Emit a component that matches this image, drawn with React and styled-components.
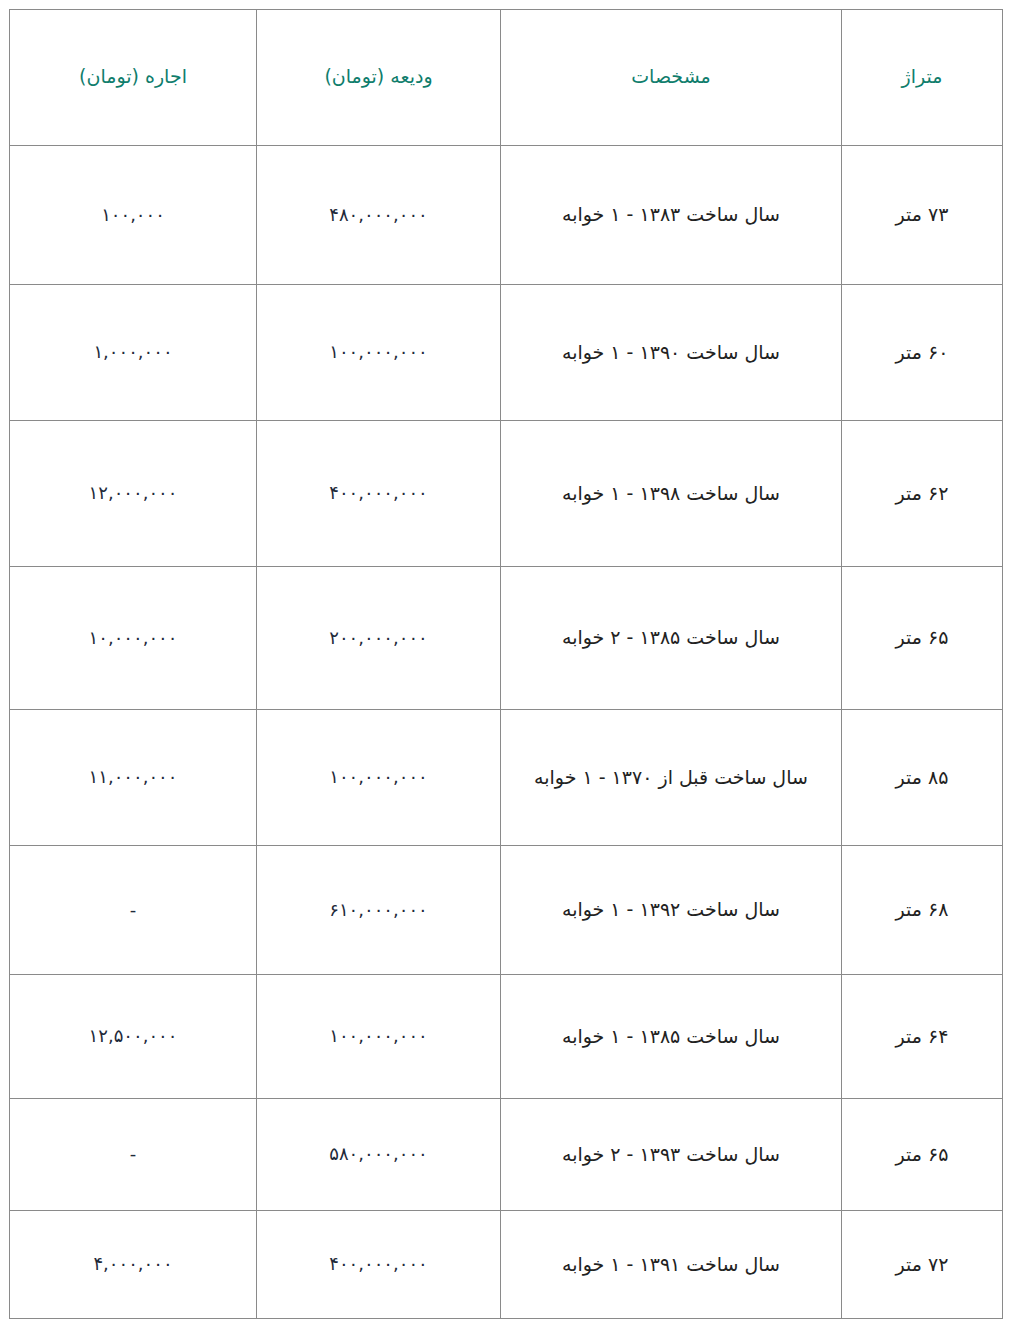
import styled, { createGlobalStyle } from "styled-components";

const GlobalStyle = createGlobalStyle`
  body {
    margin: 8px;
    background: #fff;
    font-family: "DejaVu Sans", "Noto Sans", sans-serif;
  }
`;

const rows = [
  { area: "۷۳ متر", spec: "سال ساخت ۱۳۸۳ - ۱ خوابه", deposit: "۴۸۰,۰۰۰,۰۰۰", rent: "۱۰۰,۰۰۰", h: 139 },
  { area: "۶۰ متر", spec: "سال ساخت ۱۳۹۰ - ۱ خوابه", deposit: "۱۰۰,۰۰۰,۰۰۰", rent: "۱,۰۰۰,۰۰۰", h: 136 },
  { area: "۶۲ متر", spec: "سال ساخت ۱۳۹۸ - ۱ خوابه", deposit: "۴۰۰,۰۰۰,۰۰۰", rent: "۱۲,۰۰۰,۰۰۰", h: 146 },
  { area: "۶۵ متر", spec: "سال ساخت ۱۳۸۵ - ۲ خوابه", deposit: "۲۰۰,۰۰۰,۰۰۰", rent: "۱۰,۰۰۰,۰۰۰", h: 143 },
  { area: "۸۵ متر", spec: "سال ساخت قبل از ۱۳۷۰ - ۱ خوابه", deposit: "۱۰۰,۰۰۰,۰۰۰", rent: "۱۱,۰۰۰,۰۰۰", h: 136 },
  { area: "۶۸ متر", spec: "سال ساخت ۱۳۹۲ - ۱ خوابه", deposit: "۶۱۰,۰۰۰,۰۰۰", rent: "-", h: 129 },
  { area: "۶۴ متر", spec: "سال ساخت ۱۳۸۵ - ۱ خوابه", deposit: "۱۰۰,۰۰۰,۰۰۰", rent: "۱۲,۵۰۰,۰۰۰", h: 124 },
  { area: "۶۵ متر", spec: "سال ساخت ۱۳۹۳ - ۲ خوابه", deposit: "۵۸۰,۰۰۰,۰۰۰", rent: "-", h: 112 },
  { area: "۷۲ متر", spec: "سال ساخت ۱۳۹۱ - ۱ خوابه", deposit: "۴۰۰,۰۰۰,۰۰۰", rent: "۴,۰۰۰,۰۰۰", h: 108 },
];

export default function App() {
  return (
    <>
      <GlobalStyle />
      <Table>
        <colgroup>
          <col style={{ width: 161 }} />
          <col style={{ width: 341 }} />
          <col style={{ width: 244 }} />
          <col style={{ width: 247 }} />
        </colgroup>
        <thead>
          <Row $h={136}>
            <HeadCell>متراژ</HeadCell>
            <HeadCell>مشخصات</HeadCell>
            <HeadCell>ودیعه (تومان)</HeadCell>
            <HeadCell>اجاره (تومان)</HeadCell>
          </Row>
        </thead>
        <tbody>
          {rows.map((r, i) => (
            <Row key={i} $h={r.h}>
              <Cell>{r.area}</Cell>
              <Cell>{r.spec}</Cell>
              <NumCell>{r.deposit}</NumCell>
              <NumCell>{r.rent}</NumCell>
            </Row>
          ))}
        </tbody>
      </Table>
    </>
  );
}

const Table = styled.table`
  direction: rtl;
  width: 994px;
  margin-left: 1px;
  margin-top: 1px;
  border-collapse: collapse;
  table-layout: fixed;
`;

const Row = styled.tr`
  height: ${(p) => p.$h}px;
`;

const HeadCell = styled.th`
  border: 1px solid #8a8a8a;
  padding: 0 10px 4px;
  text-align: center;
  vertical-align: middle;
  font-weight: normal;
  font-size: 19px;
  color: #0f7d6c;
`;

const Cell = styled.td`
  border: 1px solid #8a8a8a;
  padding: 0 10px 2px;
  text-align: center;
  vertical-align: middle;
  font-size: 19px;
  color: #222;
`;

const NumCell = styled(Cell)`
  color: #1e2a3a;
  font-size: 18px;
`;
